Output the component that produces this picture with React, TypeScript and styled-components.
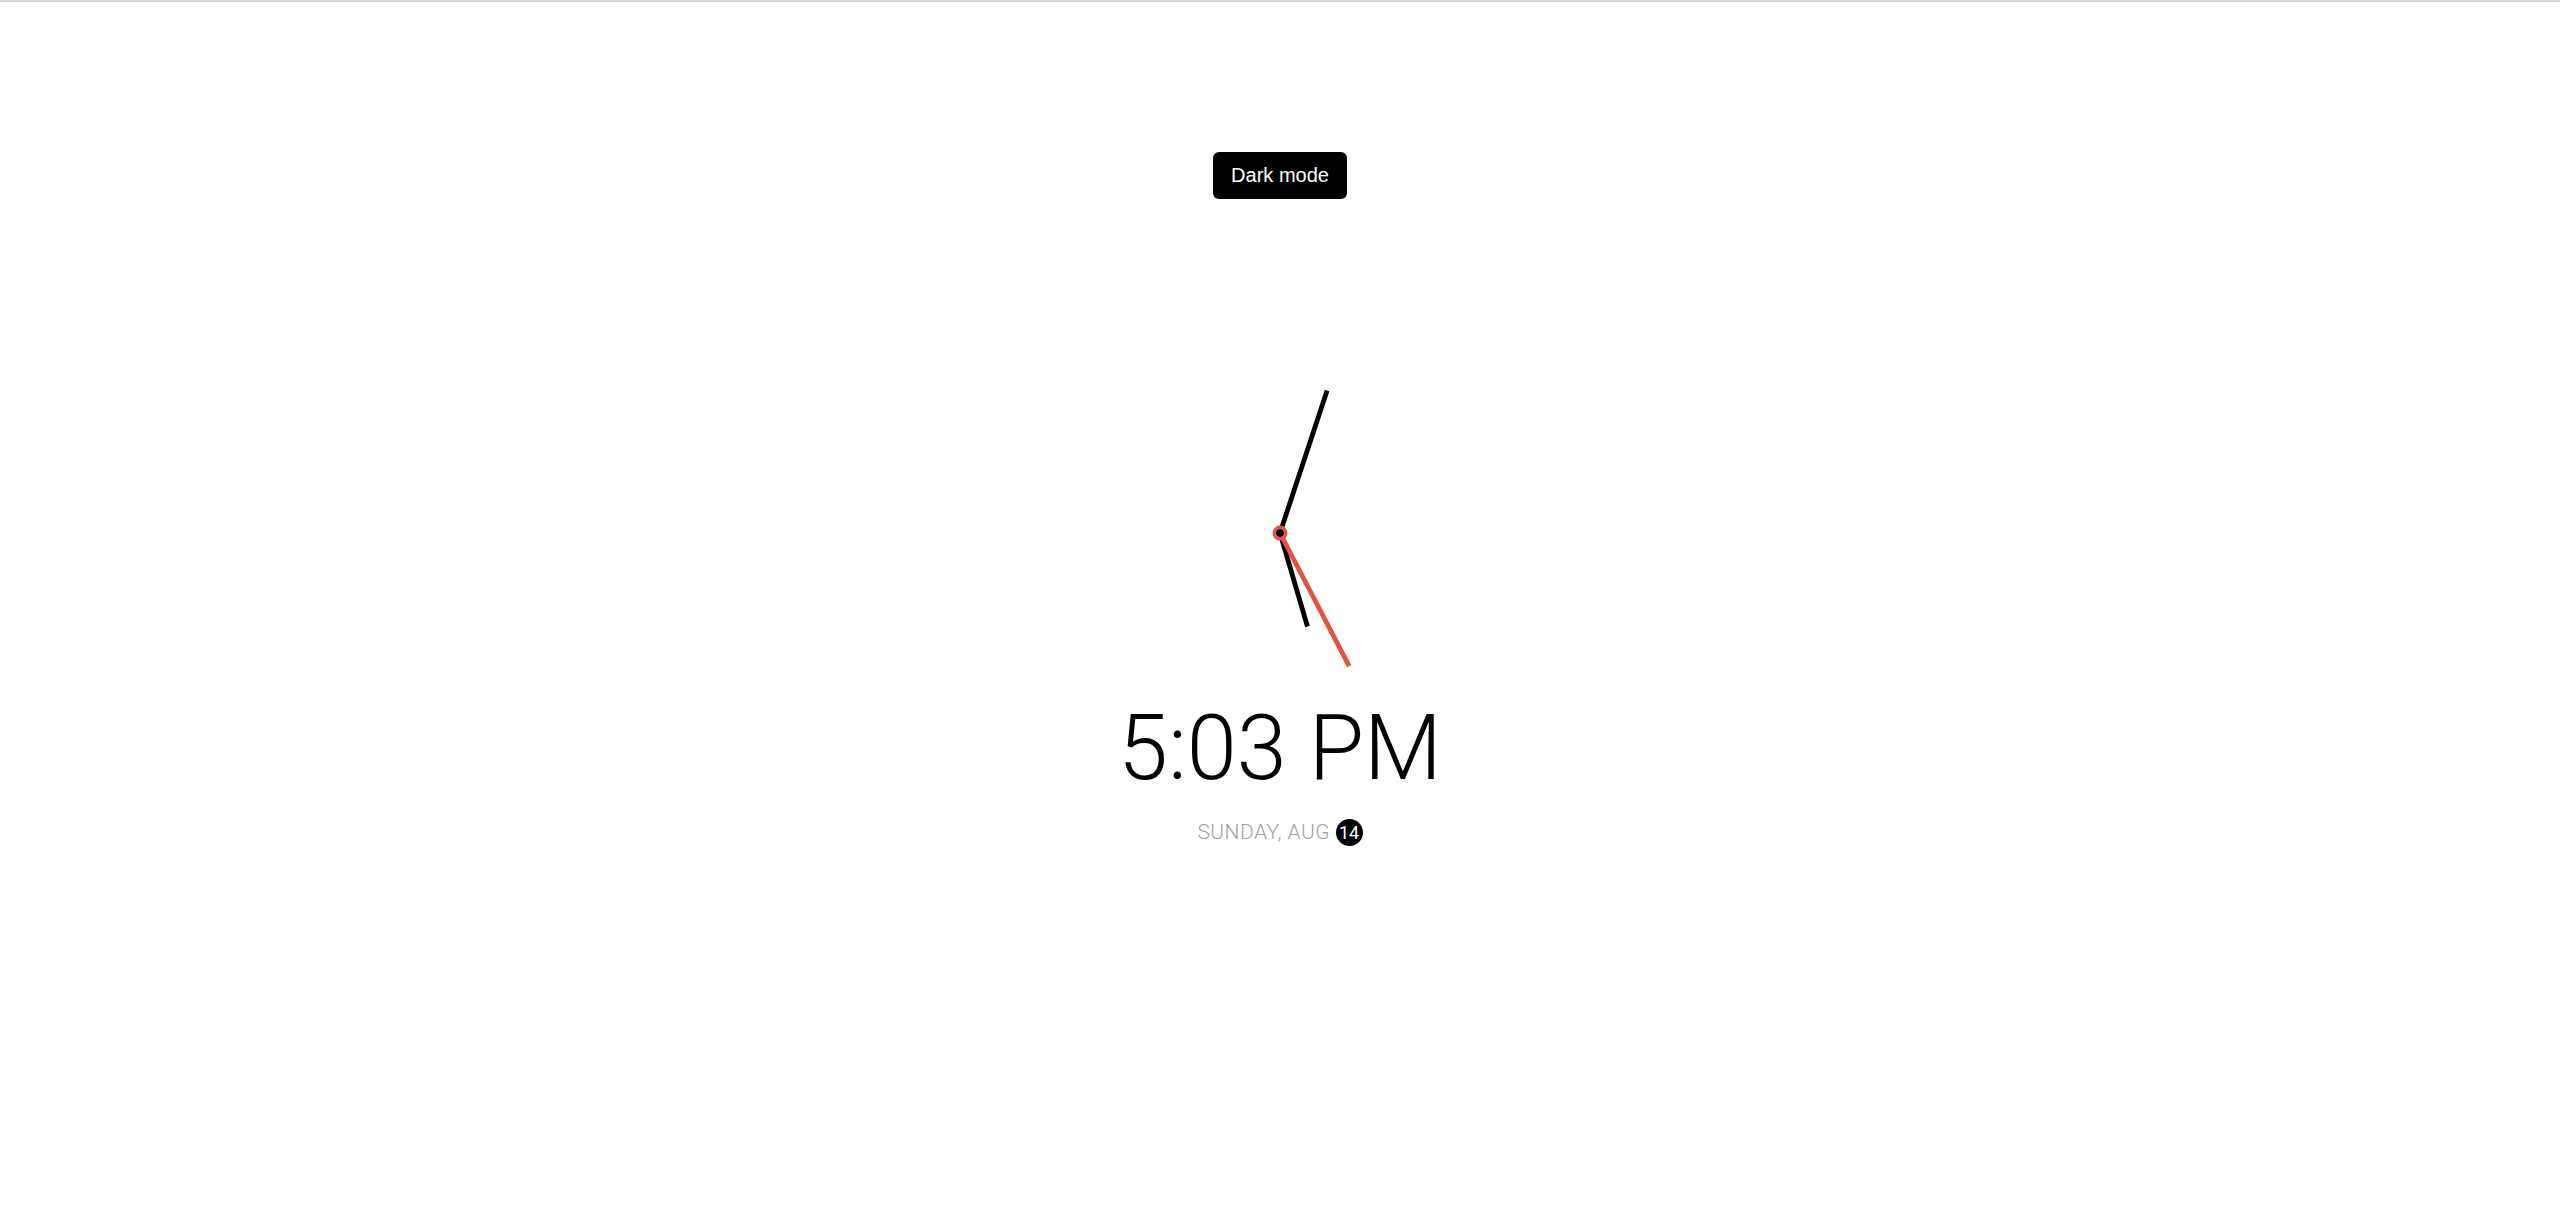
import styled, { createGlobalStyle } from "styled-components"

const GlobalStyle = createGlobalStyle({
  "*": { boxSizing: "border-box" },
  body: {
    margin: 0,
    background: "#fff",
    fontFamily: "Roboto, 'Noto Sans', sans-serif",
  },
})

const Page = styled.div({
  minHeight: "100vh",
  borderTop: "2px solid #dadada",
  display: "flex",
  flexDirection: "column",
  alignItems: "center",
  paddingTop: "150px",
})

const Toggle = styled.button({
  background: "#000",
  color: "#fff",
  border: 0,
  borderRadius: "6px",
  padding: "12px 18px",
  fontFamily: "'Liberation Sans', Arial, sans-serif",
  fontSize: "20px",
  lineHeight: "normal",
  cursor: "pointer",
})

const ClockFace = styled.svg({
  display: "block",
  width: "300px",
  height: "300px",
  marginTop: "184px",
})

const Time = styled.div({
  fontSize: "90px",
  fontWeight: 300,
  color: "#000",
  lineHeight: "normal",
  marginTop: "13px",
})

const DateLine = styled.div({
  fontSize: "21px",
  fontWeight: 300,
  color: "#9f9f9f",
  textTransform: "uppercase",
  letterSpacing: "0.45px",
  lineHeight: "normal",
  marginTop: "18px",
})

const DayBadge = styled.span({
  display: "inline-flex",
  alignItems: "center",
  justifyContent: "center",
  width: "27px",
  height: "27px",
  lineHeight: "27px",
  borderRadius: "50%",
  background: "#000",
  color: "#fff",
  fontSize: "18px",
  fontWeight: 400,
  letterSpacing: 0,
})

const scale = (n: number, max: number) => (n * 360) / max

interface HandProps {
  angle: number
  length: number
  color?: string
}

const Hand = ({ angle, length, color = "#000" }: HandProps) => (
  <rect
    x={150 - 2.4}
    y={150 - length}
    width={4.8}
    height={length}
    fill={color}
    transform={`rotate(${angle} 150 150)`}
  />
)

const App = () => {
  const hours = 5
  const minutes = 3
  const seconds = 25

  return (
    <Page>
      <GlobalStyle />
      <Toggle>Dark mode</Toggle>
      <ClockFace viewBox="0 0 300 300">
        <Hand angle={scale(hours, 11)} length={97.5} />
        <Hand angle={scale(minutes, 59)} length={150} />
        <Hand angle={scale(seconds, 59)} length={150} color="#e0553f" />
        <circle cx={150} cy={150} r={7.5} fill="#e0553f" />
        <circle cx={150} cy={150} r={3.75} fill="#000" />
      </ClockFace>
      <Time>5:03 PM</Time>
      <DateLine>
        Sunday, Aug <DayBadge>14</DayBadge>
      </DateLine>
    </Page>
  )
}

export default App
